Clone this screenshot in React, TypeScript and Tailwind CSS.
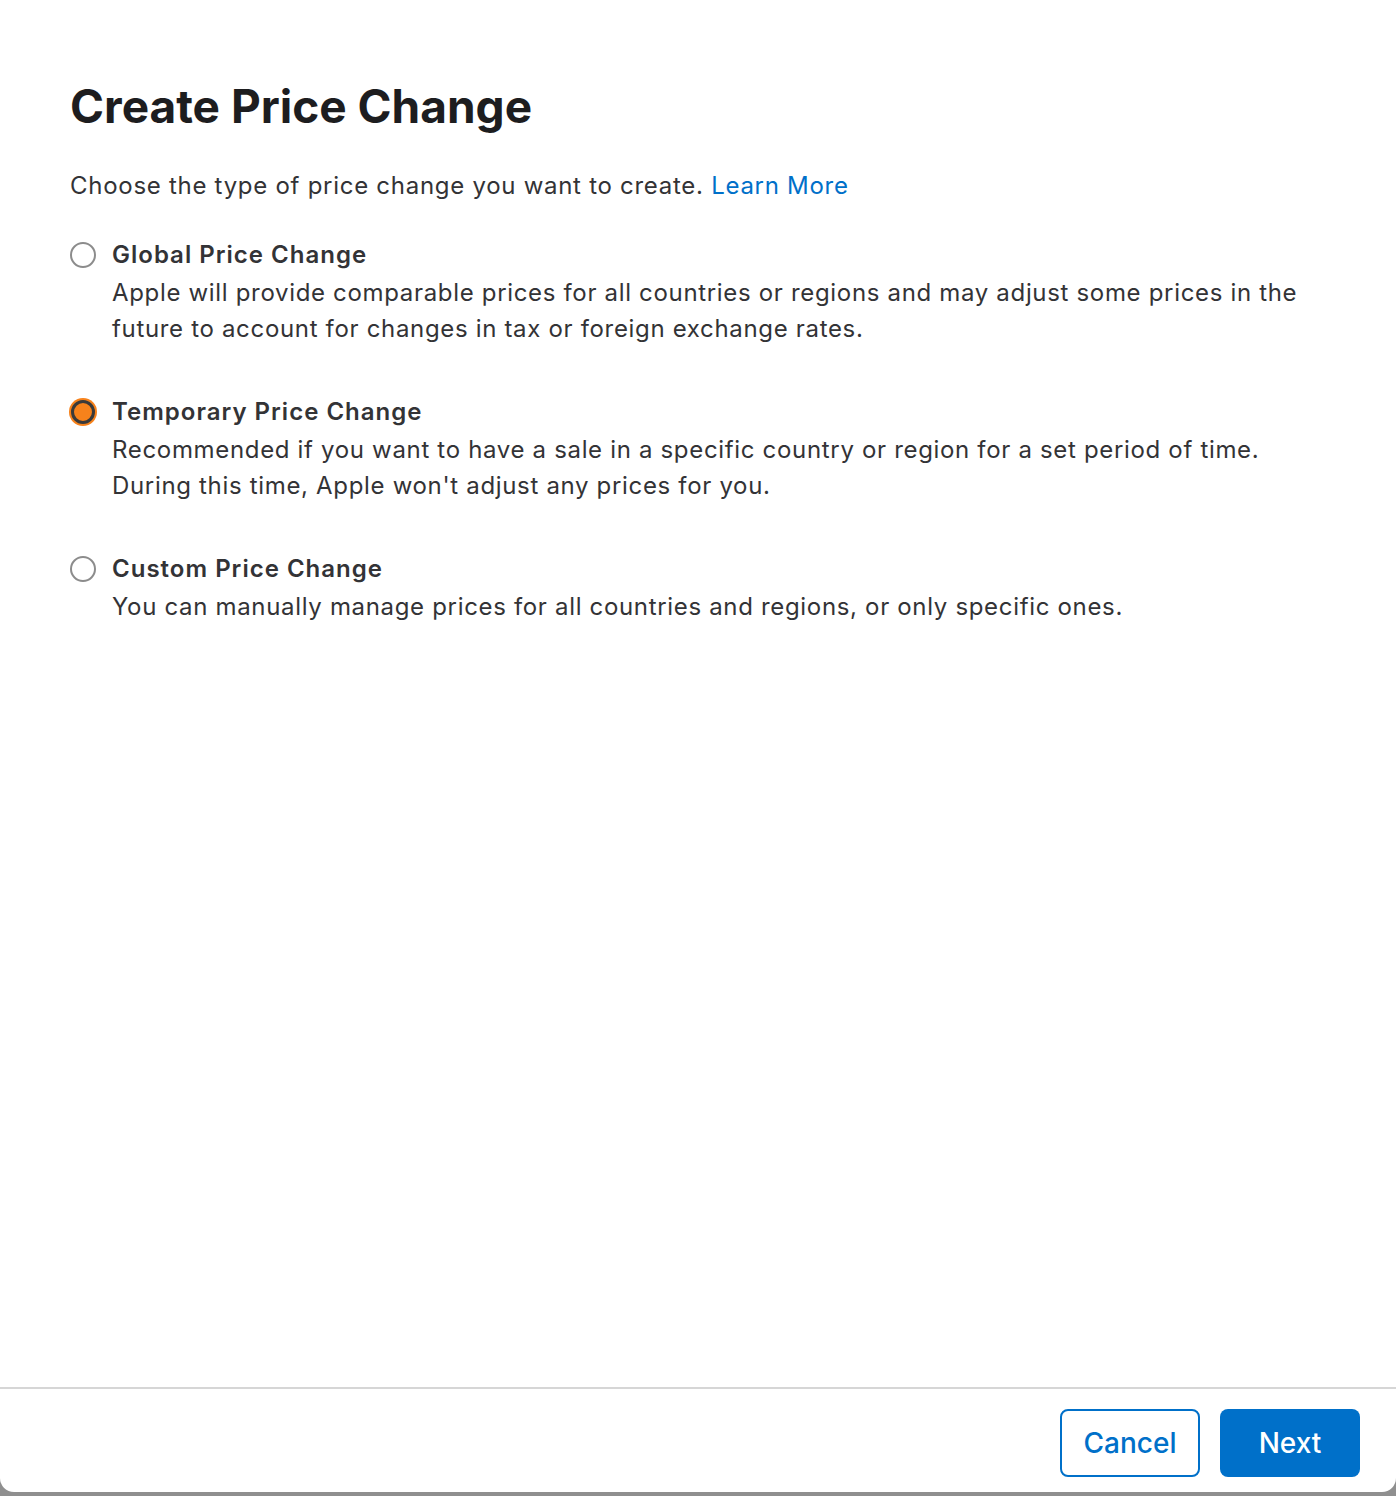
import React from "react";

type Option = {
  id: string;
  title: string;
  description: string;
};

const options: Option[] = [
  {
    id: "global",
    title: "Global Price Change",
    description:
      "Apple will provide comparable prices for all countries or regions and may adjust some prices in the future to account for changes in tax or foreign exchange rates.",
  },
  {
    id: "temporary",
    title: "Temporary Price Change",
    description:
      "Recommended if you want to have a sale in a specific country or region for a set period of time. During this time, Apple won't adjust any prices for you.",
  },
  {
    id: "custom",
    title: "Custom Price Change",
    description:
      "You can manually manage prices for all countries and regions, or only specific ones.",
  },
];

function Radio({ checked }: { checked: boolean }) {
  if (checked) {
    return (
      <div className="flex h-[28px] w-[28px] shrink-0 items-center justify-center rounded-full bg-[#f7821b] p-[2px]">
        <div className="h-full w-full rounded-full border-[3px] border-[#3a3a3a] bg-[#f7821b]" />
      </div>
    );
  }
  return (
    <div className="flex h-[28px] w-[28px] shrink-0 items-center justify-center">
      <div className="h-[26px] w-[26px] rounded-full border-2 border-[#8c8c8c] bg-white" />
    </div>
  );
}

export default function App() {
  const [selected, setSelected] = React.useState("temporary");

  return (
    <div
      className="flex h-[1496px] w-full flex-col bg-[#8f8f8f]"
      style={{ fontFamily: "Inter, 'Noto Sans', sans-serif" }}
    >
      <div className="flex flex-1 flex-col rounded-b-[14px] bg-white">
        <main className="flex-1 pl-[70px] pr-[70px] pt-[78px]">
          <h1 className="text-[46px] font-bold leading-[56px] text-[#1d1d1f]">
            Create Price Change
          </h1>
          <p className="mt-[34px] text-[24px] leading-[36px] tracking-[0.03em] text-[#333336]">
            Choose the type of price change you want to create.{" "}
            <a className="text-[#0070c9]" href="#">
              Learn More
            </a>
          </p>

          <div className="mt-[32px] flex flex-col gap-[46px]">
            {options.map((option) => (
              <label
                key={option.id}
                className="flex cursor-pointer gap-[15px]"
                onClick={() => setSelected(option.id)}
              >
                <div className="-ml-px flex h-[37px] items-center">
                  <Radio checked={selected === option.id} />
                </div>
                <div className="flex-1">
                  <p className="text-[24px] font-semibold leading-[38px] tracking-[0.042em] text-[#333336]">
                    {option.title}
                  </p>
                  <p className="mt-[1px] text-[24px] leading-[36px] tracking-[0.028em] text-[#333336]">
                    {option.description}
                  </p>
                </div>
              </label>
            ))}
          </div>
        </main>

        <footer className="flex justify-end gap-[20px] border-t-2 border-[#d6d6d6] pb-[15px] pr-[36px] pt-[20px]">
          <button className="h-[68px] w-[140px] rounded-[8px] border-2 border-[#0070c9] bg-white text-[28px] font-medium text-[#0070c9]">
            Cancel
          </button>
          <button className="h-[68px] w-[140px] rounded-[8px] bg-[#0070c9] text-[28px] font-medium text-white">
            Next
          </button>
        </footer>
      </div>
      <div className="h-[4px] shrink-0" />
    </div>
  );
}
